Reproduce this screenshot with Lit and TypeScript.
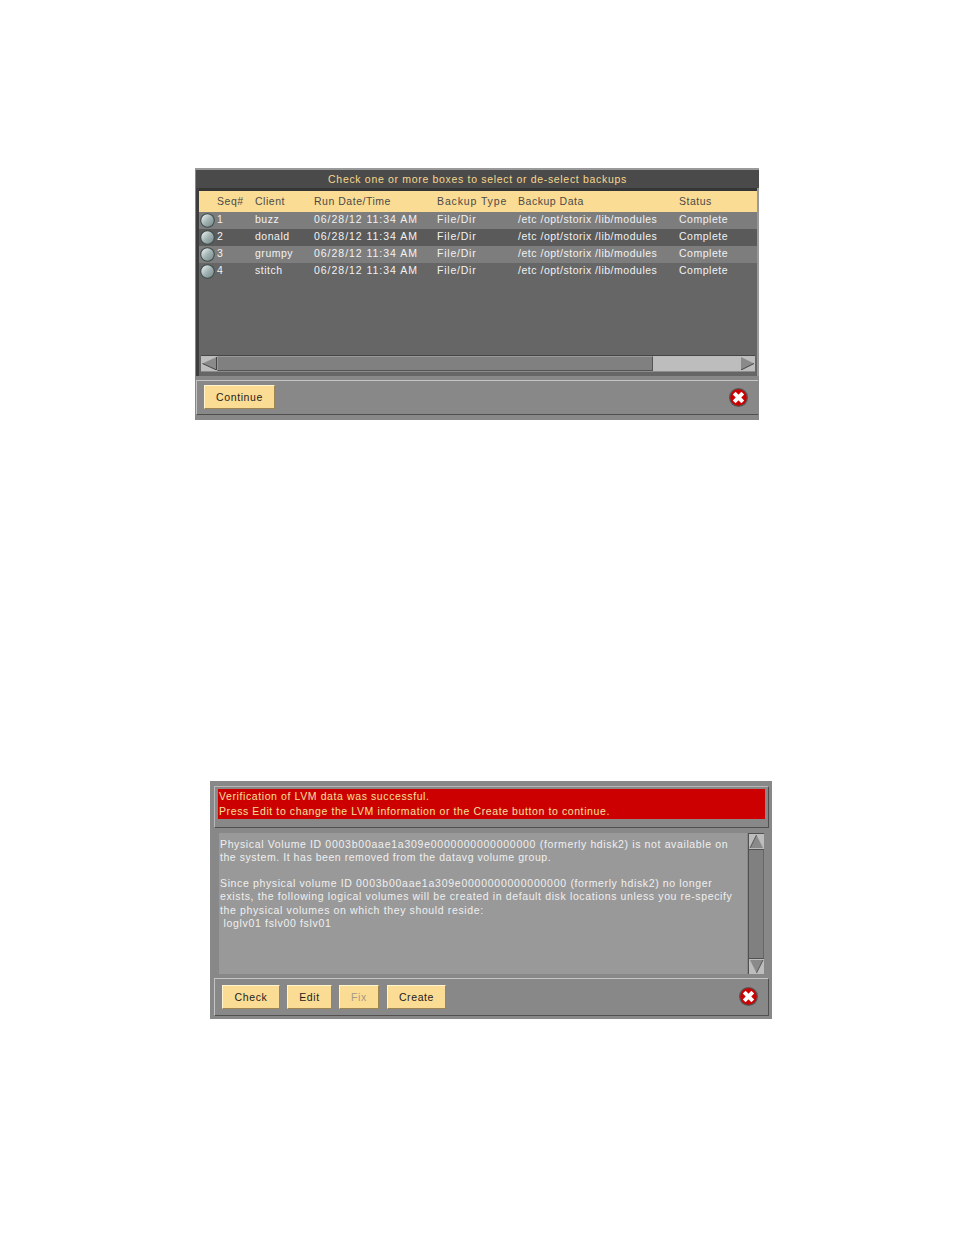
import { LitElement, html, css, svg } from "lit";
import { customElement } from "lit/decorators.js";

const rows = [
  ["1", "buzz"],
  ["2", "donald"],
  ["3", "grumpy"],
  ["4", "stitch"],
];

const closeIcon = html`<svg class="close" width="19" height="19" viewBox="0 0 19 19">
  <circle cx="9.5" cy="9.5" r="9.5" fill="#555"/>
  <circle cx="9.5" cy="9.5" r="8.3" fill="#cc0000"/>
  <path d="M5.2 5.2L13.8 13.8M13.8 5.2L5.2 13.8" stroke="#fff" stroke-width="4" stroke-linecap="butt"/>
</svg>`;

const radio = svg`<svg class="radio" width="15" height="15" viewBox="0 0 15 15">
  <defs><linearGradient id="rg" x1="0.1" y1="0.1" x2="0.9" y2="0.9"><stop offset="0" stop-color="#e2eaea"/><stop offset="0.5" stop-color="#a3b3b3"/><stop offset="1" stop-color="#7c8f8f"/></linearGradient></defs>
  <circle cx="7.5" cy="7.5" r="7.3" fill="#3e4c4c"/>
  <circle cx="7.5" cy="7.5" r="6.2" fill="url(#rg)"/>
</svg>`;

@customElement("app-root")
export class AppRoot extends LitElement {
  static styles = css`
    :host { display: block; width: 954px; height: 1235px; background: #fff; overflow: hidden;
      font-family: "Liberation Sans", Arial, sans-serif; font-size: 10.5px; letter-spacing: 0.52px; }
    * { box-sizing: border-box; }
    .page { display: flex; flex-direction: column; padding-top: 168px; }

    .p1 { width: 564px; height: 252px; margin-left: 195px; background: #888; border-top: 2px solid #9a9a9a;
      display: flex; flex-direction: column; }
    .title { height: 18px; margin: 0 0 0 1px; background: #4a4a4a; color: #f6d88f; text-align: center; line-height: 18px;
      flex: none; letter-spacing: 0.68px; }
    .tablewrap { margin: 0 2px 0 4px; height: 188px; flex: none; background: #666; border-top: 3px solid #363636;
      display: flex; flex-direction: column; box-shadow: -3px 0 0 #3d3d3d, 2px 0 0 #9a9a9a; }
    .head, .row { display: grid; grid-template-columns: 18px 38px 59px 123px 81px 161px 1fr; flex: none; }
    .head { height: 21px; background: #fbdc94; color: #4a4a4a; line-height: 20px; }
    .row { height: 17px; color: #f2f2f2; line-height: 15px; }
    .row.a { background: #7d7d7d; }
    .row.b { background: #5a5a5a; }
    .row.c { background: #666; }
    .radiocell { position: relative; }
    .radio { position: absolute; left: 1px; top: 1px; }
    .date { letter-spacing: 0.97px; }
    .ftype { letter-spacing: 0.77px; }
    .htype { letter-spacing: 0.88px; }
    .spacer { flex: 1; }
    .hscroll { height: 17px; flex: none; margin: 0 2px 4px 2px; background: #bdbdbd; border-top: 1px solid #474747;
      border-bottom: 1px solid #8c8c8c; display: flex; align-items: stretch; }
    .hscroll .arrow { width: 16px; flex: none; display: flex; align-items: center; justify-content: center; }
    .hthumb { width: 436px; background: #808080; border: 1px solid #555; border-top-color: #999; border-left-color: #999; flex: none; }
    .hfill { flex: 1; }

    .bar1 { height: 35px; flex: none; margin: 4px 1px 0 1px; border-top: 1px solid #c4c4c4; border-left: 1px solid #c4c4c4;
      border-bottom: 1px solid #4e4e4e; display: flex; align-items: center; padding: 0 10px 1px 7px; justify-content: space-between; }

    .btn { height: 24px; background: #fbdc94; color: #222; display: flex; align-items: center; justify-content: center;
      border-top: 1px solid #fff3d0; border-left: 1px solid #fff3d0; border-right: 1px solid #9e8450; border-bottom: 1px solid #9e8450;
      flex: none; letter-spacing: 0.6px; }
    .btn.dis { color: #a39a84; }
    .w71 { width: 71px; }
    .w58 { width: 58px; }
    .w45 { width: 45px; }
    .w40 { width: 40px; }
    .w59 { width: 59px; margin-left: 1px; }
    .close { display: block; flex: none; }

    .p2 { width: 562px; height: 238px; margin-left: 210px; margin-top: 361px; background: #888; padding: 5px 3px 3px 4px;
      display: flex; flex-direction: column; }
    .msg { height: 42px; flex: none; border: 1px solid #505050; border-top-color: #b8b8b8; border-left-color: #b8b8b8;
      padding: 2px 3px 8px 3px; }
    .red { height: 30px; background: #cc0000; color: #f6e09c; padding: 0 0 0 1px; line-height: 15px; letter-spacing: 0.6px; }
    .middle { flex: 1; display: flex; gap: 1px; margin: 5px 5px 4px 5px; min-height: 0; }
    .text { flex: 1; background: #999; color: #f0f0f0; padding: 4.5px 0 0 1px; line-height: 13.2px; white-space: pre; letter-spacing: 0.63px; }
    .text .l2 { letter-spacing: 0.55px; }
    .text .l7 { letter-spacing: 0.66px; }
    .text .id { letter-spacing: 0.75px; }
    .text div { min-height: 13.2px; }
    .vscroll { width: 16px; flex: none; background: #bdbdbd; display: flex; flex-direction: column; border-left: 1px solid #505050; border-top: 1px solid #505050; }
    .vscroll .arrow { height: 15px; flex: none; display: flex; align-items: center; justify-content: center; }
    .vthumb { flex: 1; background: #808080; border-top: 1px solid #505050; border-bottom: 1px solid #505050; border-right: 1px solid #666; }
    .bar2 { height: 38px; flex: none; border: 1px solid #505050; border-top-color: #c4c4c4; border-left-color: #c4c4c4;
      display: flex; align-items: center; gap: 7px; padding: 0 10px 0 7px; }
    .bar2 .close { margin-left: auto; margin-bottom: 2px; }
  `;

  render() {
    return html`<div class="page">
      <section class="p1">
        <div class="title">Check one or more boxes to select or de-select backups</div>
        <div class="tablewrap">
          <div class="head">
            <span></span><span>Seq#</span><span>Client</span><span>Run Date/Time</span><span class="htype">Backup Type</span><span>Backup Data</span><span>Status</span>
          </div>
          ${rows.map((r, i) => html`<div class="row ${["a", "b", "a", "c"][i]}">
            <span class="radiocell">${radio}</span><span>${r[0]}</span><span>${r[1]}</span>
            <span class="date">06/28/12 11:34 AM</span><span class="ftype">File/Dir</span><span>/etc /opt/storix /lib/modules</span><span>Complete</span>
          </div>`)}
          <div class="spacer"></div>
          <div class="hscroll">
            <div class="arrow"><svg width="15" height="13" viewBox="0 0 15 13"><path d="M14.5 0V13L0.5 6.5Z" fill="#8a8a8a"/><path d="M0.5 6.5L14.5 13V0" stroke="#444" fill="none"/></svg></div>
            <div class="hthumb"></div>
            <div class="hfill"></div>
            <div class="arrow"><svg width="15" height="13" viewBox="0 0 15 13"><path d="M1 0V13L14 6.5Z" fill="#8a8a8a"/><path d="M1 13L14 6.5" stroke="#444" fill="none"/></svg></div>
          </div>
        </div>
        <div class="bar1">
          <div class="btn w71">Continue</div>
          ${closeIcon}
        </div>
      </section>

      <section class="p2">
        <div class="msg">
          <div class="red">Verification of LVM data was successful.<br>Press Edit to change the LVM information or the Create button to continue.</div>
        </div>
        <div class="middle">
          <div class="text"><div>Physical Volume ID <span class="id">0003b00aae1a309e0000000000000000</span> (formerly hdisk2) is not available on</div><div class="l2">the system. It has been removed from the datavg volume group.</div><div></div><div>Since physical volume ID <span class="id">0003b00aae1a309e0000000000000000</span> (formerly hdisk2) no longer</div><div>exists, the following logical volumes will be created in default disk locations unless you re-specify</div><div>the physical volumes on which they should reside:</div><div class="l7"> loglv01 fslv00 fslv01</div></div>
          <div class="vscroll">
            <div class="arrow"><svg width="15" height="15" viewBox="0 0 15 15"><path d="M1 14H14L7.5 1Z" fill="#8a8a8a"/><path d="M7.5 1L1 14" stroke="#555"/></svg></div>
            <div class="vthumb"></div>
            <div class="arrow"><svg width="15" height="15" viewBox="0 0 15 15"><path d="M1 1H14L7.5 14Z" fill="#8a8a8a"/><path d="M7.5 14L14 1" stroke="#555"/></svg></div>
          </div>
        </div>
        <div class="bar2">
          <div class="btn w58">Check</div>
          <div class="btn w45">Edit</div>
          <div class="btn dis w40">Fix</div>
          <div class="btn w59">Create</div>
          ${closeIcon}
        </div>
      </section>
    </div>`;
  }
}
